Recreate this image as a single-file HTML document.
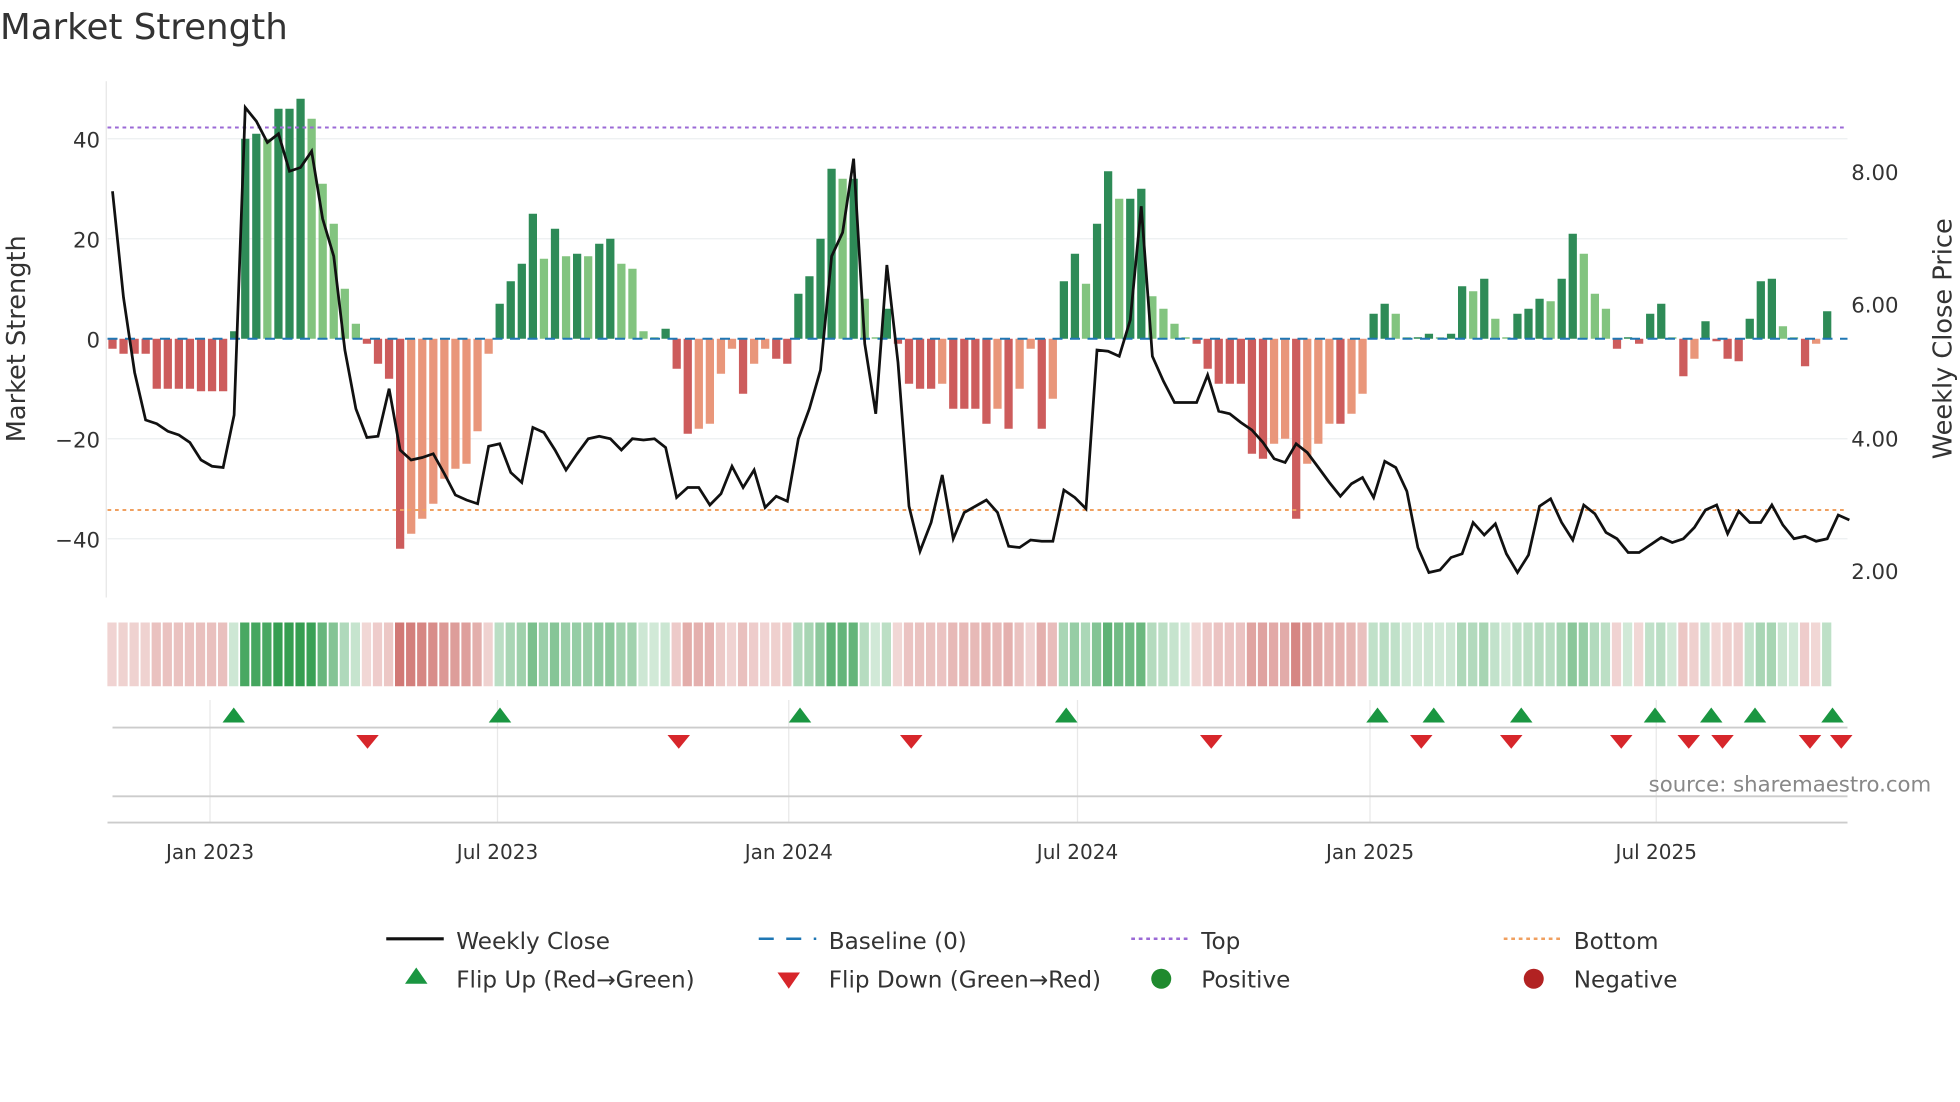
<!DOCTYPE html>
<html><head><meta charset="utf-8"><style>
html,body{margin:0;padding:0;background:#fff;width:1960px;height:1102px;overflow:hidden}
svg{display:block;font-family:"DejaVu Sans","Liberation Sans",sans-serif}
</style></head><body>
<svg id="s" width="1960" height="1102" viewBox="0 0 1568 881.6" xmlns="http://www.w3.org/2000/svg">
<rect width="1568" height="882" fill="#fff"/>
<text x="0" y="31" font-size="28.5" fill="#333">Market Strength</text>
<g stroke="#eceff1" stroke-width="1">
<line x1="86" x2="1478" y1="111" y2="111"/><line x1="86" x2="1478" y1="191" y2="191"/>
<line x1="86" x2="1478" y1="351" y2="351"/><line x1="86" x2="1478" y1="431" y2="431"/>
</g>
<line x1="85" x2="85" y1="65" y2="478" stroke="#e6e6e6"/>
<g font-size="17" fill="#333" text-anchor="end">
<text x="80" y="118">40</text><text x="80" y="198">20</text><text x="80" y="278">0</text>
<text x="80" y="358">−20</text><text x="80" y="438">−40</text></g>
<g font-size="17" fill="#333">
<text x="1481" y="144">8.00</text><text x="1481" y="250">6.00</text><text x="1481" y="357">4.00</text><text x="1481" y="463">2.00</text></g>
<text transform="translate(20,271) rotate(-90)" font-size="20.5" fill="#333" text-anchor="middle">Market Strength</text>
<text transform="translate(1561,271) rotate(-90)" font-size="20.5" fill="#333" text-anchor="middle">Weekly Close Price</text>
<g id="bars"></g>
<line x1="86" x2="1478" y1="271" y2="271" stroke="#1f77b4" stroke-width="1.6" stroke-dasharray="8,6"/>
<line x1="86" x2="1478" y1="102" y2="102" stroke="#9b6ad6" stroke-width="1.6" stroke-dasharray="3,3"/>
<line x1="86" x2="1478" y1="408" y2="408" stroke="#f0a060" stroke-width="1.6" stroke-dasharray="3,3"/>
<polyline id="pl" fill="none" stroke="#111" stroke-width="2.2"/>
<g id="heat"></g>
<g stroke="#e8e8e8"><line x1="168" x2="168" y1="560" y2="658"/><line x1="398" x2="398" y1="560" y2="658"/><line x1="631" x2="631" y1="560" y2="658"/><line x1="862" x2="862" y1="560" y2="658"/><line x1="1096" x2="1096" y1="560" y2="658"/><line x1="1325" x2="1325" y1="560" y2="658"/></g>
<line x1="90" x2="1478" y1="582" y2="582" stroke="#ccc" stroke-width="1.5"/>
<line x1="90" x2="1478" y1="637" y2="637" stroke="#ccc" stroke-width="1.5"/>
<line x1="86" x2="1478" y1="658" y2="658" stroke="#ccc" stroke-width="1.5"/>
<g id="mk"></g>
<text x="1545" y="633" font-size="17" fill="#888" text-anchor="end">source: sharemaestro.com</text>
<g font-size="16" fill="#333" text-anchor="middle">
<text x="168" y="687">Jan 2023</text><text x="398" y="687">Jul 2023</text><text x="631" y="687">Jan 2024</text>
<text x="862" y="687">Jul 2024</text><text x="1096" y="687">Jan 2025</text><text x="1325" y="687">Jul 2025</text></g>
<g font-size="18.5" fill="#333">
<line x1="309" x2="355" y1="751" y2="751" stroke="#111" stroke-width="2.5"/><text x="365" y="759">Weekly Close</text>
<line x1="607" x2="653" y1="751" y2="751" stroke="#1f77b4" stroke-width="2" stroke-dasharray="12,10"/><text x="663" y="759">Baseline (0)</text>
<line x1="905" x2="951" y1="751" y2="751" stroke="#9b6ad6" stroke-width="2" stroke-dasharray="3,3"/><text x="961" y="759">Top</text>
<line x1="1203" x2="1249" y1="751" y2="751" stroke="#f0a060" stroke-width="2" stroke-dasharray="3,3"/><text x="1259" y="759">Bottom</text>
<polygon points="333,774 342,787 324,787" fill="#1a9641"/><text x="365" y="790">Flip Up (Red→Green)</text>
<polygon points="622,778 640,778 631,791" fill="#d7262b"/><text x="663" y="790">Flip Down (Green→Red)</text>
<circle cx="929" cy="783" r="8" fill="#1f8a2e"/><text x="961" y="790">Positive</text>
<circle cx="1227" cy="783" r="8" fill="#b22222"/><text x="1259" y="790">Negative</text>
</g>
</svg>
<script>
var v=[-2,-3,-3,-3,-10,-10,-10,-10,-10.5,-10.5,-10.5,1.5,40,41,40,46,46,48,44,31,23,10,3,-1,-5,-8,-42,-39,-36,-33,-28,-26,-25,-18.5,-3,7,11.5,15,25,16,22,16.5,17,16.5,19,20,15,14,1.5,0.3,2,-6,-19,-18,-17,-7,-2,-11,-5,-2,-4,-5,9,12.5,20,34,32,32,8,0.3,6,-1,-9,-10,-10,-9,-14,-14,-14,-17,-14,-18,-10,-2,-18,-12,11.5,17,11,23,33.5,28,28,30,8.5,6,3,0.3,-1,-6,-9,-9,-9,-23,-24,-21,-20,-36,-25,-21,-17,-17,-15,-11,5,7,5,0.3,0.3,1,0.3,1,10.5,9.5,12,4,0.3,5,6,8,7.5,12,21,17,9,6,-2,0.3,-1,5,7,0.3,-7.5,-4,3.5,-0.5,-4,-4.5,4,11.5,12,2.5,0.3,-5.5,-1,5.5];
var dx=8.85,x0=90,b="",h="";
for(var i=0;i<v.length;i++){var x=x0+i*dx,val=v[i],p=i?v[i-1]:0,c;
if(val>=0){c=(val>=p)?"#2e8b57":"#82c47f";}else{c=(val<=p)?"#cd5c5c":"#e9967a";}
var y=val>=0?271-val*4:271,hh=Math.max(Math.abs(val)*4,1);
b+='<rect x="'+(x-3.3)+'" y="'+y+'" width="6.6" height="'+hh+'" fill="'+c+'"/>';
var t=Math.min(Math.abs(val)/46,1),hc,a;
if(val>=0){a=0.22+0.75*t;hc="rgba(46,155,75,"+a.toFixed(2)+")";}else{a=0.22+0.6*t;hc="rgba(195,80,75,"+a.toFixed(2)+")";}
h+='<rect x="'+(x-4.1)+'" y="498" width="7.4" height="51" fill="'+hc+'"/>';}
document.getElementById("bars").innerHTML=b;document.getElementById("heat").innerHTML=h;
var ly=[153,238,298,336,339,345,348,354,368,373,374,332,86,97,114,107,137,134,121,175,205,280,327,350,349,311,360,368,366,363,379,396,400,403,357,355,378,386,342,346,360,376,363,351,349,351,360,351,352,351,358,398,390,390,404,395,373,390,376,406,397,401,351,327,296,205,186,127,275,331,212,290,405,441,418,380,431,410,405,400,410,437,438,432,433,433,392,398,407,280,281,285,256,165,285,305,322,322,322,300,329,331,338,344,354,367,370,355,362,374,386,397,387,382,398,369,374,393,438,458,456,446,443,418,428,419,443,458,444,405,399,418,432,404,411,426,431,442,442,436,430,434,431,422,408,404,427,409,418,418,404,420,431,429,433,431,412,416];
var pts=[];for(var i=0;i<ly.length;i++)pts.push((x0+i*dx).toFixed(1)+","+ly[i]);
document.getElementById("pl").setAttribute("points",pts.join(" "));
var up=[187,400,640,853,1102,1147,1217,1324,1369,1404,1466],dn=[294,543,729,969,1137,1209,1297,1351,1378,1448,1473],m="";
up.forEach(function(x){m+='<polygon points="'+x+',566 '+(x+9)+',578 '+(x-9)+',578" fill="#1a9641"/>';});
dn.forEach(function(x){m+='<polygon points="'+(x-9)+',588 '+(x+9)+',588 '+x+',599" fill="#d7262b"/>';});
document.getElementById("mk").innerHTML=m;
</script>
</body></html>
